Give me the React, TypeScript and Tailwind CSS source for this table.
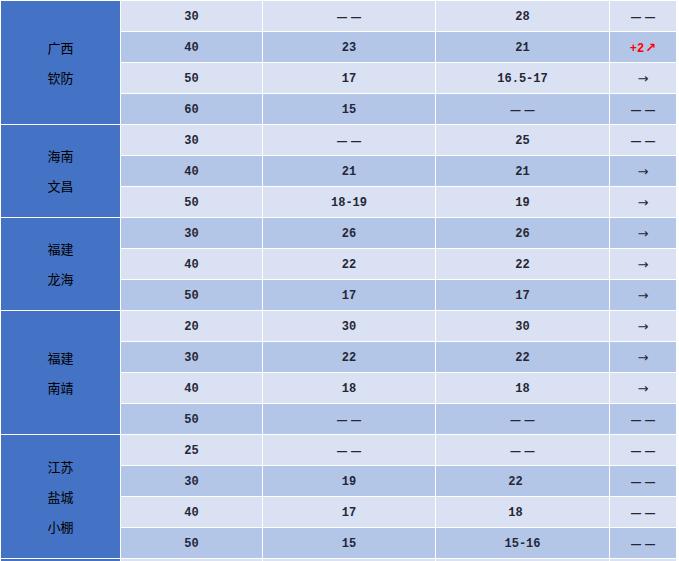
type Cell = string;
type Row = [Cell, Cell, Cell, Cell];
type Group = { label: string[]; span: string; rows: Row[] };

const DASH = "--";

const groups: Group[] = [
  {
    label: ["广西", "钦防"],
    span: "row-span-4",
    rows: [
      ["30", DASH, "28", DASH],
      ["40", "23", "21", "+2"],
      ["50", "17", "16.5-17", "→"],
      ["60", "15", DASH, DASH],
    ],
  },
  {
    label: ["海南", "文昌"],
    span: "row-span-3",
    rows: [
      ["30", DASH, "25", DASH],
      ["40", "21", "21", "→"],
      ["50", "18-19", "19", "→"],
    ],
  },
  {
    label: ["福建", "龙海"],
    span: "row-span-3",
    rows: [
      ["30", "26", "26", "→"],
      ["40", "22", "22", "→"],
      ["50", "17", "17", "→"],
    ],
  },
  {
    label: ["福建", "南靖"],
    span: "row-span-4",
    rows: [
      ["20", "30", "30", "→"],
      ["30", "22", "22", "→"],
      ["40", "18", "18", "→"],
      ["50", DASH, DASH, DASH],
    ],
  },
  {
    label: ["江苏", "盐城", "小棚"],
    span: "row-span-4",
    rows: [
      ["25", DASH, DASH, DASH],
      ["30", "19", "22 ", DASH],
      ["40", "17", "18 ", DASH],
      ["50", "15", "15-16", DASH],
    ],
  },
  {
    label: [],
    span: "row-span-1",
    rows: [["", "", "", ""]],
  },
];

function Dash() {
  return (
    <span className="inline-flex gap-[4px] font-['Liberation_Sans'] text-[10px] font-bold">
      <span>—</span>
      <span>—</span>
    </span>
  );
}

function Value({ v }: { v: string }) {
  if (v === DASH) return <Dash />;
  if (v === "→")
    return <span className="font-['DejaVu_Sans'] text-[13px] font-normal">→</span>;
  if (v === "+2")
    return (
      <span className="font-bold text-[#ff0000]">
        +2<span className="ml-px font-['DejaVu_Sans'] text-[13px] font-bold">↗</span>
      </span>
    );
  // trailing blank in the source sheet pushes a few cells off centre
  if (v.endsWith(" ")) return <span className="pr-[14px]">{v.trim()}</span>;
  return <span>{v}</span>;
}

export default function App() {
  let rowIndex = 0;

  return (
    <div className="h-[561px] overflow-hidden bg-white">
      <div className="grid w-[677px] grid-cols-[119px_141px_172px_173px_66px] auto-rows-[30px] gap-px bg-white p-px font-['Liberation_Mono'] text-[12px] font-bold text-[#262636]">
        {groups.map((g, gi) => (
          <>
            <div
              key={`l${gi}`}
              className={`col-start-1 ${g.span} flex flex-col items-center justify-center bg-[#4472c4] font-['Noto_Sans_CJK_SC',sans-serif] text-[13px] font-normal leading-[30px] text-black`}
            >
              {g.label.map((t) => (
                <span key={t}>{t}</span>
              ))}
            </div>
            {g.rows.map((r) => {
              const bg = rowIndex++ % 2 === 0 ? "bg-[#d9e1f2]" : "bg-[#b4c6e7]";
              return r.map((v, ci) => (
                <div key={`${gi}-${rowIndex}-${ci}`} className={`flex items-center justify-center pt-[2px] ${bg}`}>
                  <Value v={v} />
                </div>
              ));
            })}
          </>
        ))}
      </div>
    </div>
  );
}
